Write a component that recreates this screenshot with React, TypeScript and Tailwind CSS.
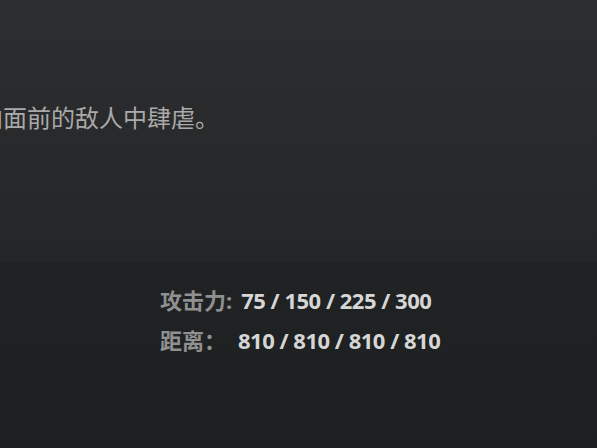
export default function App() {
  return (
    <div
      className="w-[597px] h-[448px] overflow-hidden flex flex-col"
      style={{ fontFamily: '"Noto Sans", "Noto Sans CJK SC", sans-serif' }}
    >
      {/* ability description */}
      <div className="h-[262px] bg-gradient-to-b from-[#2d2e30] to-[#252627] overflow-hidden pt-[101px]">
        <p className="ml-[-21px] whitespace-nowrap text-[24px] leading-[34px] text-[#a9a9a9]">
          向面前的敌人中肆虐。
        </p>
      </div>
      {/* stats */}
      <div className="flex-1 bg-gradient-to-b from-[#202223] to-[#1d2021] pt-[18px] pl-[160px] font-bold text-[22px]">
        <div className="flex h-[40px] items-center">
          <span className="text-[#909090]">攻击力:</span>
          <span className="ml-[9px] text-[#d6d6d6] tracking-[-0.5px]">75 / 150 / 225 / 300</span>
        </div>
        <div className="flex h-[40px] items-center">
          <span className="text-[#909090]">距离：</span>
          <span className="ml-[12px] text-[#d6d6d6] tracking-[-0.5px]">810 / 810 / 810 / 810</span>
        </div>
      </div>
    </div>
  );
}
